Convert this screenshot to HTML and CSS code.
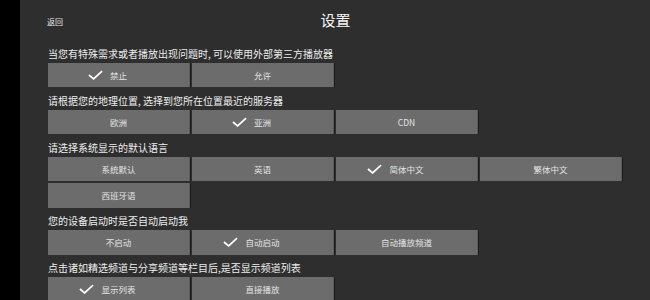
FILE: index.html
```html
<!DOCTYPE html>
<html lang="zh-CN">
<head>
    <meta charset="UTF-8">
    <meta name="viewport" content="width=device-width, initial-scale=1.0">
    <title>设置</title>
    <link rel="stylesheet" href="styles.css">
</head>
<body>
    <div class="side-bar"></div>
    <main>
        <header>
            <a class="back-link">返回</a>
            <h1>设置</h1>
            <span></span>
        </header>

        <section class="setting">
            <div class="setting-label">当您有特殊需求或者播放出现问题时, 可以使用外部第三方播放器</div>
            <div class="options">
                <div class="option checked"><span>禁止</span></div>
                <div class="option"><span>允许</span></div>
            </div>
        </section>

        <section class="setting">
            <div class="setting-label">请根据您的地理位置, 选择到您所在位置最近的服务器</div>
            <div class="options">
                <div class="option"><span>欧洲</span></div>
                <div class="option checked"><span>亚洲</span></div>
                <div class="option"><span>CDN</span></div>
            </div>
        </section>

        <section class="setting">
            <div class="setting-label">请选择系统显示的默认语言</div>
            <div class="options">
                <div class="option"><span>系统默认</span></div>
                <div class="option"><span>英语</span></div>
                <div class="option checked"><span>简体中文</span></div>
                <div class="option"><span>繁体中文</span></div>
                <div class="option"><span>西班牙语</span></div>
            </div>
        </section>

        <section class="setting">
            <div class="setting-label">您的设备启动时是否自动启动我</div>
            <div class="options">
                <div class="option"><span>不启动</span></div>
                <div class="option checked"><span>自动启动</span></div>
                <div class="option"><span>自动播放频道</span></div>
            </div>
        </section>

        <section class="setting">
            <div class="setting-label">点击诸如精选频道与分享频道等栏目后,是否显示频道列表</div>
            <div class="options">
                <div class="option checked"><span>显示列表</span></div>
                <div class="option"><span>直接播放</span></div>
            </div>
        </section>
    </main>

    <script>
        // 给选中的选项加上勾
        const checkSvg = '<svg class="check" viewBox="0 0 16 10"><path d="M1 5 L6 9.2 L15 0.8" fill="none" stroke="#fff" stroke-width="1.8"/></svg>';
        document.querySelectorAll('.option.checked span').forEach(span => {
            span.insertAdjacentHTML('afterbegin', checkSvg);
        });
    </script>
</body>
</html>
```

FILE: styles.css
```css
html, body {
    height: 100%;
}
body {
    margin: 0;
    display: flex;
    background-color: #2e2e2e;
    color: #ededed;
    font-family: "Noto Sans CJK SC", "Noto Sans", sans-serif;
    overflow: hidden;
}
.side-bar {
    width: 20px;
    flex-shrink: 0;
    background-color: #000;
}
main {
    flex: 1;
    padding: 0 27px 0 28px;
}
header {
    height: 40px;
    display: grid;
    grid-template-columns: 1fr auto 1fr;
    align-items: start;
}
.back-link {
    font-size: 8px;
    line-height: 10px;
    margin-top: 17px;
    margin-left: -1px;
    color: #e6e6e6;
}
h1 {
    margin: 0;
    margin-top: 11px;
    font-size: 15px;
    line-height: 17px;
    font-weight: normal;
    color: #f5f5f5;
}
.setting-label {
    margin-top: 6.5px;
    margin-bottom: 2px;
    font-size: 10px;
    line-height: 14px;
    white-space: nowrap;
}
.options {
    display: flex;
    flex-wrap: wrap;
    gap: 2px;
}
.option {
    width: 142px;
    height: 24.5px;
    box-sizing: border-box;
    background-color: #6c6c6c;
    border-right: 1px solid #5a5a5a;
    display: flex;
    justify-content: center;
    align-items: center;
    font-size: 8.5px;
    color: #e4e4e4;
    box-shadow: 1px 0 0 #1e1e1e;
}
.option span {
    position: relative;
}
.check {
    position: absolute;
    right: calc(100% + 7px);
    top: 50%;
    width: 15px;
    height: 10px;
    margin-top: -5px;
}
```
